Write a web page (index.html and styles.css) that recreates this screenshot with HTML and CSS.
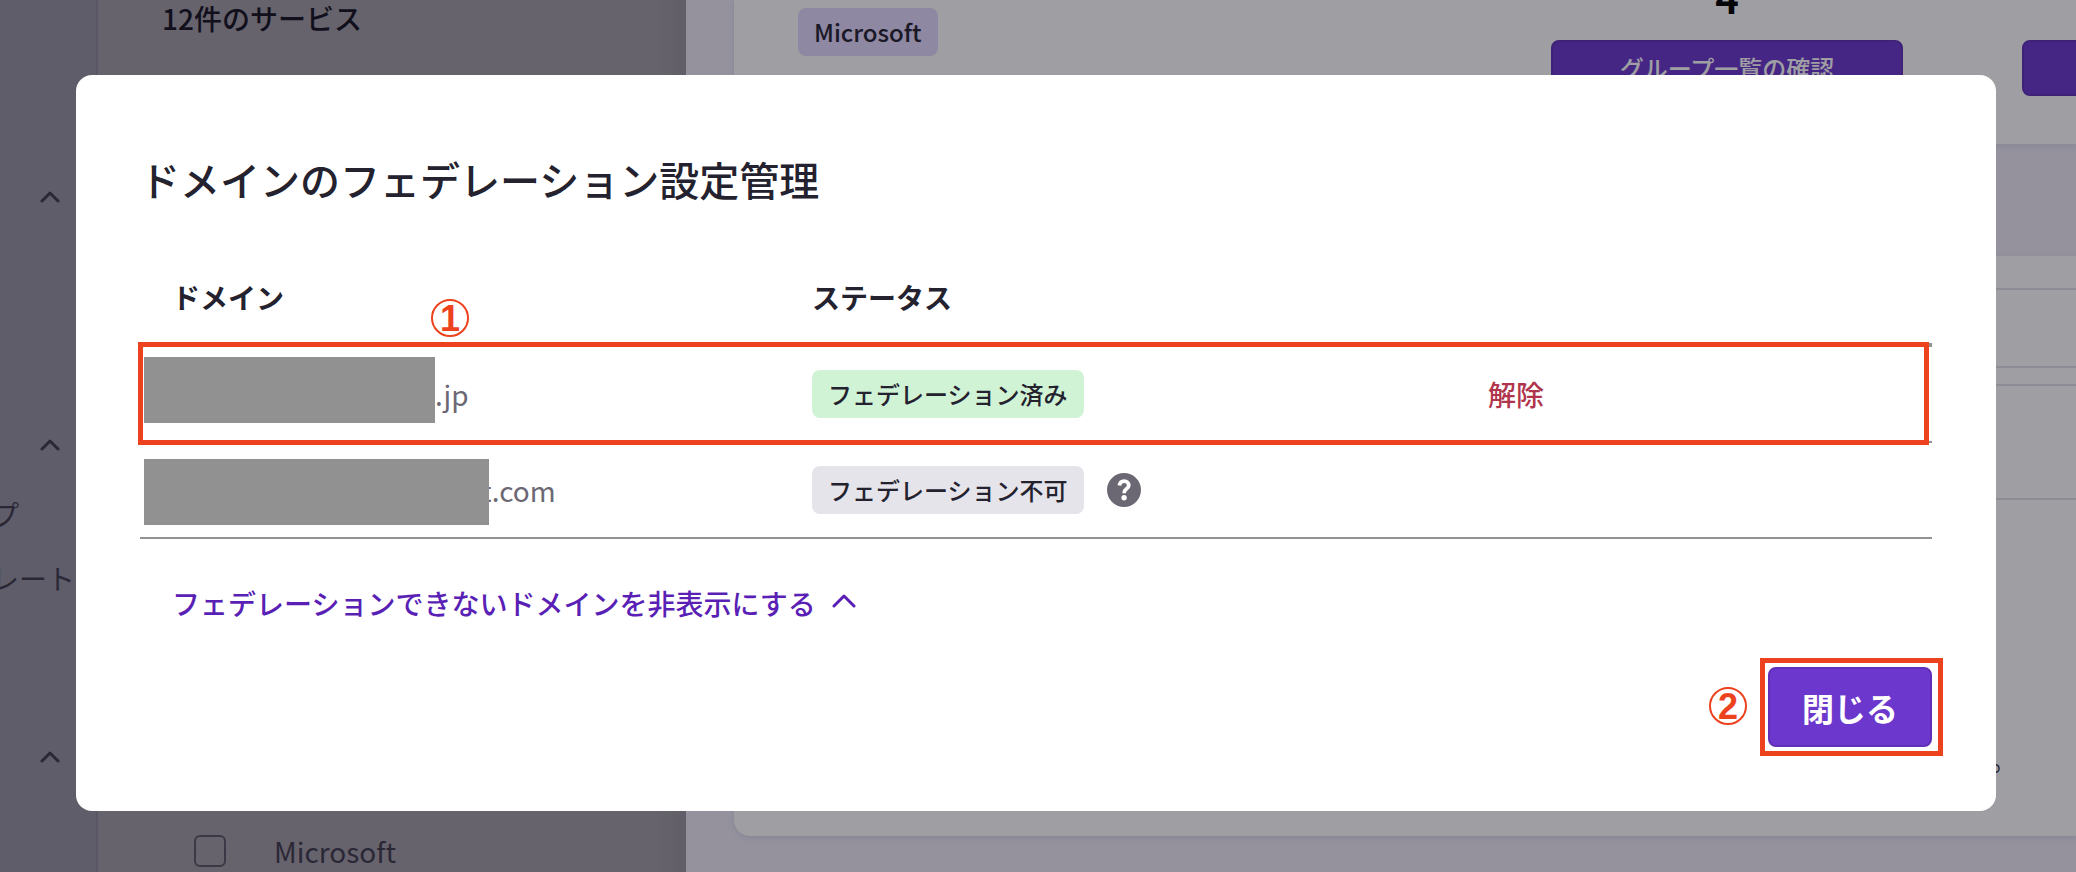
FILE: index.html
```html
<!DOCTYPE html>
<html lang="ja">
<head>
    <meta charset="UTF-8">
    <meta name="viewport" content="width=device-width, initial-scale=1.0">
    <title>ドメインのフェデレーション設定管理</title>
    <link rel="stylesheet" href="styles.css">
</head>
<body>

    <div class="page">
        <!-- サイドバー -->
        <nav class="sidebar">
            <div class="nav-section">
                <svg class="nav-chevron" viewBox="0 0 20 12"><path d="M2 10 L10 2 L18 10"/></svg>
            </div>
            <div class="nav-section nav-section-open">
                <svg class="nav-chevron" viewBox="0 0 20 12"><path d="M2 10 L10 2 L18 10"/></svg>
                <ul class="nav-list">
                    <li>プ</li>
                    <li>レート</li>
                </ul>
            </div>
            <div class="nav-section">
                <svg class="nav-chevron" viewBox="0 0 20 12"><path d="M2 10 L10 2 L18 10"/></svg>
            </div>
        </nav>

        <!-- サービス一覧 -->
        <section class="services">
            <h2 class="services-count">12件のサービス</h2>
            <label class="service">
                <input type="checkbox" class="service-check">
                <span>Microsoft</span>
            </label>
        </section>

        <!-- 詳細ドロワー -->
        <main class="drawer">
            <div class="card summary">
                <div class="summary-tags"><span class="tag tag-purple">Microsoft</span></div>
                <div class="stat">
                    <div class="stat-value">4</div>
                    <button class="btn btn-small">グループ一覧の確認</button>
                </div>
                <div class="stat">
                    <div class="stat-value"></div>
                    <button class="btn btn-small" aria-label="一覧の確認"></button>
                </div>
            </div>
            <div class="card detail">
                <div class="detail-box"></div>
                <div class="detail-box detail-box-tall"></div>
                <p class="detail-note">。</p>
            </div>
        </main>
    </div>

    <!-- モーダル -->
    <div class="overlay">
        <div class="modal" role="dialog" aria-labelledby="modalTitle">
            <h1 class="modal-title" id="modalTitle">ドメインのフェデレーション設定管理</h1>

            <div class="table-wrap">
                <table class="domains">
                    <thead>
                        <tr>
                            <th class="col-domain">ドメイン</th>
                            <th class="col-status">ステータス</th>
                            <th></th>
                        </tr>
                    </thead>
                    <tbody>
                        <tr>
                            <td class="domain-cell">
                                <div class="domain"><span class="mask mask-short"></span><span>.jp</span></div>
                            </td>
                            <td>
                                <div class="status">
                                    <span class="tag tag-green">フェデレーション済み</span>
                                </div>
                            </td>
                            <td><button class="release">解除</button></td>
                        </tr>
                        <tr>
                            <td class="domain-cell">
                                <div class="domain"><span class="mask mask-long"></span><span class="domain-tucked">t.com</span></div>
                            </td>
                            <td>
                                <div class="status">
                                    <span class="tag tag-gray">フェデレーション不可</span>
                                    <button class="help" aria-label="ヘルプ">
                                        <svg viewBox="0 0 34 34">
                                            <circle cx="17" cy="17" r="17" fill="#6b6874"/>
                                            <path d="M12.4 12.6 C12.8 9.6 14.7 8.2 17.2 8.2 C19.9 8.2 21.8 9.9 21.8 12.2 C21.8 14.2 20.6 15.2 19.1 16.3 C17.7 17.3 17.1 18 17.1 20.2" fill="none" stroke="#fff" stroke-width="3.8"/>
                                            <circle cx="17.1" cy="24.8" r="2.7" fill="#fff"/>
                                        </svg>
                                    </button>
                                </div>
                            </td>
                            <td></td>
                        </tr>
                    </tbody>
                </table>
                <div class="frame frame-row"></div>
                <span class="mark mark-row">1</span>
            </div>

            <button class="toggle">
                フェデレーションできないドメインを非表示にする
                <svg class="toggle-chevron" viewBox="0 0 26 16"><path d="M2 13 L12 3 L22 13"/></svg>
            </button>

            <div class="modal-footer">
                <div class="close-wrap">
                    <button class="btn btn-close">閉じる</button>
                    <div class="frame frame-close"></div>
                    <span class="mark mark-close">2</span>
                </div>
            </div>
        </div>
    </div>

</body>
</html>
```

FILE: styles.css
```css
* {
    box-sizing: border-box;
}

body {
    margin: 0;
    overflow: hidden;
    font-family: "Noto Sans CJK JP", sans-serif;
    font-size: 28px;
    line-height: 42px;
    color: #23222e;
}

button {
    font-family: inherit;
    border: none;
    padding: 0;
    background: none;
    cursor: pointer;
}

.page {
    display: flex;
    height: 100vh;
}

/* サイドバー */
.sidebar {
    flex: none;
    width: 98px;
    padding-top: 173px;
    overflow: hidden;
    background-color: #94939f;
    border-right: 2px solid #8b8995;
}

.nav-section {
    height: 248px;
}

.nav-section-open {
    height: 312px;
}

.nav-chevron {
    display: block;
    width: 20px;
    height: 12px;
    margin-left: 40px;
    position: relative;
    top: 18px;
}

.nav-chevron path,
.toggle-chevron path {
    fill: none;
    stroke: #3d3a4a;
    stroke-width: 3;
    stroke-linecap: round;
    stroke-linejoin: round;
}

.nav-list {
    margin: 0 0 0 -9px;
    padding: 49px 0 0;
    list-style: none;
    white-space: nowrap;
    color: #3d3a4a;
}

.nav-list li {
    line-height: 64px;
}

/* サービス一覧 */
.services {
    flex: none;
    width: 588px;
    display: flex;
    flex-direction: column;
    justify-content: space-between;
    padding: 0 64px;
    background: linear-gradient(to left, #97949a, #a09da4 28px);
}

.services-count {
    margin: 0;
    font-size: 28px;
    font-weight: 500;
    line-height: 36px;
    color: #14121f;
}

.service {
    display: flex;
    align-items: center;
    gap: 48px;
    padding-left: 32px;
    color: #3d3a4a;
}

.service-check {
    appearance: none;
    width: 32px;
    height: 32px;
    margin: 0;
    border: 2px solid #5b5866;
    border-radius: 6px;
}

/* ドロワー */
.drawer {
    flex: 1;
    min-width: 0;
    padding-left: 48px;
    overflow: hidden;
    background-color: #eeebf7;
}

.card {
    background-color: #fff;
    box-shadow: 0 2px 6px rgba(60, 50, 90, 0.1);
}

.summary {
    display: flex;
    gap: 119px;
    height: 144px;
}

.summary-tags {
    flex: none;
    width: 698px;
    padding: 7px 0 0 64px;
}

.stat {
    flex: none;
    width: 352px;
    text-align: center;
}

.stat-value {
    height: 40px;
    margin-top: -3px;
    margin-bottom: 3px;
    font-size: 40px;
    font-weight: 700;
    line-height: 0;
    color: #000;
}

.detail {
    height: 580px;
    margin-top: 112px;
    padding: 32px 0 0 32px;
    border-radius: 0 0 0 16px;
}

.detail-box {
    height: 80px;
    margin-bottom: 16px;
    border: 2px solid #e2e1ea;
    border-right: none;
}

.detail-box-tall {
    height: 116px;
}

.detail-note {
    margin: 238px 0 0;
    padding-left: 1224px;
    color: #3d3a4a;
}

/* タグ */
.tag {
    display: inline-block;
    padding: 0 16px;
    border-radius: 8px;
    font-size: 24px;
    font-weight: 500;
    line-height: 48px;
    vertical-align: middle;
}

.tag-purple {
    background-color: #e3dbff;
}

.tag-green {
    background-color: #d0f3d6;
}

.tag-gray {
    background-color: #e5e4ea;
}

/* ボタン */
.btn {
    border: 2px solid #5f2fb8;
    border-radius: 8px;
    background-color: #6b37cc;
    color: #fff;
    font-weight: 700;
}

.btn-small {
    display: block;
    width: 100%;
    height: 56px;
    padding-bottom: 2px;
    font-size: 24px;
    font-weight: 500;
}

.btn-close {
    display: block;
    height: 80px;
    padding: 0 32px;
    font-size: 32px;
}

/* モーダル */
.overlay {
    position: fixed;
    inset: 0;
    display: flex;
    align-items: flex-start;
    padding: 75px 80px 0 76px;
    background-color: rgba(15, 12, 25, 0.4);
}

.modal {
    flex: 1;
    padding: 74px 64px 64px;
    border-radius: 16px;
    background-color: #fff;
}

.modal-title {
    margin: 0 0 42px;
    font-size: 40px;
    font-weight: 500;
    line-height: 60px;
}

.table-wrap {
    position: relative;
}

.domains {
    width: 100%;
    table-layout: fixed;
    border-collapse: separate;
    border-spacing: 0;
}

.domains th,
.domains td {
    height: 96px;
    padding: 0 32px;
    text-align: left;
    vertical-align: middle;
    border-bottom: 2px solid #929292;
}

.domains th {
    font-weight: 700;
    border-bottom-width: 4px;
}

.col-domain {
    width: 640px;
}

.col-status {
    width: 676px;
}

.domains .domain-cell {
    padding-left: 4px;
}

.domain {
    display: flex;
    align-items: center;
    color: #6b6874;
}

.mask {
    position: relative;
    height: 66px;
    background-color: #919191;
}

.mask-short {
    width: 291px;
    margin-bottom: 8px;
}

.mask-long {
    width: 345px;
    margin-top: 4px;
}

.domain-tucked {
    margin-left: -8px;
}

.status {
    display: flex;
    align-items: center;
    gap: 23px;
}

.help svg {
    display: block;
    width: 34px;
    height: 34px;
}

.release {
    font-size: 28px;
    font-weight: 500;
    line-height: 42px;
    color: #b0344c;
}

.toggle {
    display: flex;
    align-items: center;
    gap: 16px;
    margin: 43px 0 43px 32px;
    font-size: 28px;
    font-weight: 500;
    line-height: 42px;
    color: #5a1fb5;
}

.toggle-chevron {
    width: 26px;
    height: 16px;
    margin-bottom: 4px;
}

.toggle-chevron path {
    stroke: #5a1fb5;
}

.modal-footer {
    display: flex;
    justify-content: flex-end;
}

.close-wrap {
    position: relative;
}

/* 手順の赤枠と番号 */
.frame {
    position: absolute;
    border: 5px solid #ec431e;
    pointer-events: none;
}

.frame-row {
    top: 91px;
    left: -2px;
    right: 3px;
    height: 103px;
}

.frame-close {
    inset: -9px -11px -9px -8px;
}

.mark {
    position: absolute;
    width: 38px;
    height: 38px;
    border: 2px solid #ec431e;
    border-radius: 50%;
    font-family: "Liberation Sans", sans-serif;
    font-size: 36px;
    font-weight: 700;
    line-height: 36px;
    text-align: center;
    color: #ec431e;
}

.mark-row {
    top: 48px;
    left: 291px;
}

.mark-close {
    top: 20px;
    left: -59px;
}
```
